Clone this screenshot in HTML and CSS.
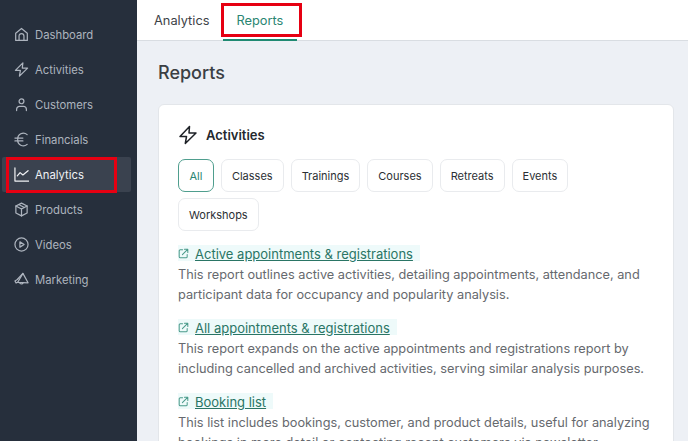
FILE: index.html
```html
<!DOCTYPE html>
<html lang="en">
<head>
<meta charset="utf-8">
<title>Reports</title>
<link rel="stylesheet" href="styles.css">
</head>
<body>
<div class="app">
  <aside class="sidebar">
    <nav class="nav">
      <a class="nav-item"><svg class="nav-icon" viewBox="0 0 16 16"><path d="M1.800 14.300V6.600L8 1.600l6.200 5v7.700z"/><path d="M5.400 14.300V9.600a2.600 2.600 0 0 1 5.200 0v4.700"/></svg>Dashboard</a>
      <a class="nav-item"><svg class="nav-icon" viewBox="0 0 16 16"><path d="M9.500 1 1.500 9h5.300L5.800 15l8.700-8.500H8.800z"/></svg>Activities</a>
      <a class="nav-item"><svg class="nav-icon" viewBox="0 0 16 16"><circle cx="8" cy="4.600" r="2.600"/><path d="M2.800 14.500v-1.500A3 3 0 0 1 5.800 10h4.400a3 3 0 0 1 3 3v1.500"/></svg>Customers</a>
      <a class="nav-item"><svg class="nav-icon" viewBox="0 0 16 16"><path d="M14 2.800A6 6 0 0 0 4 8a6 6 0 0 0 10 5.200M1 6.500h8.500M1 9.500h8.500"/></svg>Financials</a>
      <a class="nav-item is-active"><svg class="nav-icon" viewBox="0 0 16 16"><path d="M1 1v14h15"/><path d="M3.500 9.500 6.500 6l3 2.500L15 4"/></svg>Analytics<span class="mark mark-nav"></span></a>
      <a class="nav-item"><svg class="nav-icon" viewBox="0 0 16 16"><path d="M8 1.200 14 4.200v7.600l-6 3-6-3V4.200z"/><path d="M2 4.200 8 7.400l6-3.200M8 7.400v7.400M5 2.700l6 3.200"/></svg>Products</a>
      <a class="nav-item"><svg class="nav-icon" viewBox="0 0 16 16"><circle cx="8" cy="8" r="7"/><path class="fill" d="M6.300 5.200 10.800 8l-4.500 2.800z"/></svg>Videos</a>
      <a class="nav-item"><svg class="nav-icon" viewBox="0 0 16 16"><path d="M9.500 1.500 15 11.500 4 11z"/><path d="M9.500 1.500 3.500 8 1 9.500 2.200 11.800 4 11"/><path d="M6 11.300a2 2 0 0 0 3.800.2"/></svg>Marketing</a>
    </nav>
  </aside>
  <div class="main">
    <header class="tabs">
      <a class="tab">Analytics</a>
      <a class="tab is-current">Reports<span class="mark mark-tab"></span></a>
    </header>
    <main class="content">
      <h1 class="page-title">Reports</h1>
      <section class="card">
        <h2 class="card-title"><svg class="card-icon" viewBox="0 0 20 20"><path d="M11.500 1.500 2 11.500h6.500L7.300 18.500 18 8H11z"/></svg>Activities</h2>
        <div class="chips">
          <span class="chip is-selected">All</span>
          <span class="chip">Classes</span>
          <span class="chip">Trainings</span>
          <span class="chip">Courses</span>
          <span class="chip">Retreats</span>
          <span class="chip">Events</span>
          <span class="chip">Workshops</span>
        </div>
        <article class="report">
          <div class="report-head"><svg class="link-icon" viewBox="0 0 12 12"><path d="M5 2H2.500A1.200 1.200 0 0 0 1.300 3.200v6.300a1.200 1.200 0 0 0 1.200 1.200h6.300A1.200 1.200 0 0 0 10 9.500V7"/><path d="M4.800 7.200 10.500 1.500M7 1.300h3.700V5"/></svg><a class="report-link">Active appointments &amp; registrations</a></div>
          <p class="report-text">This report outlines active activities, detailing appointments, attendance, and participant data for occupancy and popularity analysis.</p>
        </article>
        <article class="report">
          <div class="report-head"><svg class="link-icon" viewBox="0 0 12 12"><path d="M5 2H2.500A1.200 1.200 0 0 0 1.300 3.200v6.300a1.200 1.200 0 0 0 1.200 1.200h6.300A1.200 1.200 0 0 0 10 9.500V7"/><path d="M4.800 7.200 10.500 1.500M7 1.300h3.700V5"/></svg><a class="report-link">All appointments &amp; registrations</a></div>
          <p class="report-text">This report expands on the active appointments and registrations report by including cancelled and archived activities, serving similar analysis purposes.</p>
        </article>
        <article class="report">
          <div class="report-head"><svg class="link-icon" viewBox="0 0 12 12"><path d="M5 2H2.500A1.200 1.200 0 0 0 1.300 3.200v6.300a1.200 1.200 0 0 0 1.200 1.200h6.300A1.200 1.200 0 0 0 10 9.500V7"/><path d="M4.800 7.200 10.500 1.500M7 1.300h3.700V5"/></svg><a class="report-link">Booking list</a></div>
          <p class="report-text">This list includes bookings, customer, and product details, useful for analyzing bookings in more detail or contacting recent customers via newsletter.</p>
        </article>
      </section>
    </main>
  </div>
</div>
</body>
</html>
```
FILE: styles.css
```css
* { box-sizing: border-box; }
html, body { margin: 0; height: 100%; overflow: hidden; }
body { font-family: "Inter", "Liberation Sans", sans-serif; color: #32373d; }
.app { display: flex; width: 688px; height: 441px; overflow: hidden; }

.sidebar { flex: 0 0 137px; background: #262f3c; padding: 17px 6px 0 2px; }
.nav { display: flex; flex-direction: column; }
.nav-item { position: relative; display: flex; align-items: center; gap: 6px; height: 35px; padding-left: 12px; font-size: 11.300px; color: #adb4be; }
.nav-item.is-active { color: #f0f2f5; background: #3a424f; border-radius: 2px; }
.nav-icon { width: 15px; height: 15px; flex: none; fill: none; stroke: currentColor; stroke-width: 1.300; stroke-linejoin: round; stroke-linecap: round; }
.nav-icon .fill { fill: none; stroke: currentColor; }

.mark { position: absolute; border: 3px solid #e60012; pointer-events: none; }
.mark-nav { left: 4px; right: 14px; top: 0; bottom: -1px; }
.mark-tab { left: -15px; right: -19px; top: 3px; bottom: 3px; }

.main { flex: 1; min-width: 0; display: flex; flex-direction: column; background: #edf0f5; }
.tabs { flex: none; display: flex; height: 41px; padding-left: 17px; gap: 27px; background: #fff; border-bottom: 1px solid #d9dde2; }
.tab { position: relative; display: flex; align-items: center; height: 40px; font-size: 12.800px; color: #3d4247; }
.tab.is-current { color: #2a8572; }
.tab.is-current::after { content: ""; position: absolute; left: -13px; right: -14px; bottom: -1px; height: 2px; background: #1f8a72; }

.content { flex: 1; padding: 0 14px 0 21px; min-height: 0; }
.page-title { margin: 21px 0 20px; font-size: 18px; line-height: 22px; font-weight: 500; color: #3b3f44; }

.card { background: #fff; border: 1px solid #e3e6ea; border-radius: 6px; padding: 19px 19px 20px; }
.card-title { display: flex; align-items: center; gap: 8px; margin: 0 0 13px; font-size: 13px; line-height: 22px; font-weight: 600; color: #24282d; }
.card-icon { width: 20px; height: 20px; fill: none; stroke: #1e2227; stroke-width: 1.500; stroke-linejoin: round; }

.chips { display: flex; flex-wrap: wrap; gap: 6px 7px; margin-bottom: 13px; }
.chip { display: flex; align-items: center; height: 33px; padding: 0 10px; border: 1px solid #e9ebee; border-radius: 7px; font-size: 11px; color: #2b2f34; background: #fff; }
.chip.is-selected { color: #2a8572; border-color: #4f9e8e; padding: 0 10.500px; }

.report { margin-bottom: 13px; }
.report-head { display: flex; align-items: center; gap: 6px; width: fit-content; height: 21px; padding: 0 7px 2px 0; background: linear-gradient(#fff 1px, #eefafa 1px, #eefafa 17px, #fff 17px); }
.link-icon { width: 11px; height: 11px; flex: none; fill: none; stroke: #4a9a8a; stroke-width: 1.100; stroke-linecap: round; stroke-linejoin: round; }
.report-link { font-size: 13px; color: #2a7565; text-decoration: underline; }
.report-text { margin: 0; font-size: 12.750px; line-height: 20px; color: #66696e; }
```
